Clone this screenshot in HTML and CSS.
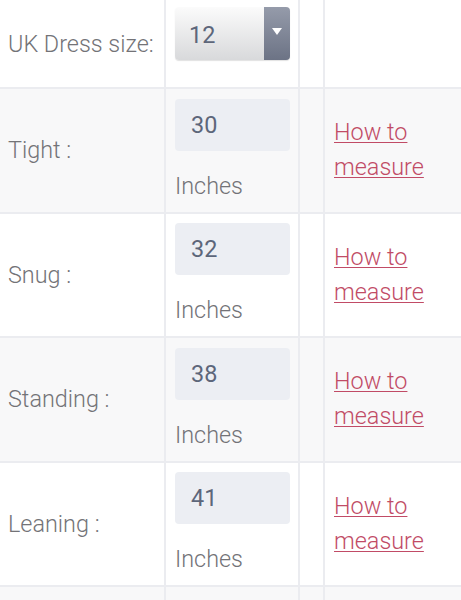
FILE: index.html
```html
<!DOCTYPE html>
<html lang="en">

<head>
    <meta charset="UTF-8">
    <meta name="viewport" content="width=device-width, initial-scale=1.0">
    <title>Size guide</title>

    <link rel="stylesheet" href="styles.css">
</head>

<body>
    <div id="wrap">
        <table id="sizes">
            <tr class="row-size">
                <td class="label">UK Dress size:</td>
                <td class="field">
                    <div class="select">
                        <span class="select-value">12</span>
                        <span class="select-arrow"></span>
                    </div>
                </td>
                <td class="gap"></td>
                <td class="help"></td>
            </tr>
            <tr class="odd">
                <td class="label">Tight :</td>
                <td class="field">
                    <div class="input">30</div>
                    <div class="unit">Inches</div>
                </td>
                <td class="gap"></td>
                <td class="help"><a href="javascript:;">How to measure</a></td>
            </tr>
            <tr>
                <td class="label">Snug :</td>
                <td class="field">
                    <div class="input">32</div>
                    <div class="unit">Inches</div>
                </td>
                <td class="gap"></td>
                <td class="help"><a href="javascript:;">How to measure</a></td>
            </tr>
            <tr class="odd">
                <td class="label">Standing :</td>
                <td class="field">
                    <div class="input">38</div>
                    <div class="unit">Inches</div>
                </td>
                <td class="gap"></td>
                <td class="help"><a href="javascript:;">How to measure</a></td>
            </tr>
            <tr>
                <td class="label">Leaning :</td>
                <td class="field">
                    <div class="input">41</div>
                    <div class="unit">Inches</div>
                </td>
                <td class="gap"></td>
                <td class="help"><a href="javascript:;">How to measure</a></td>
            </tr>
            <tr class="odd">
                <td class="label"></td>
                <td class="field"></td>
                <td class="gap"></td>
                <td class="help"></td>
            </tr>
        </table>
    </div>
</body>

</html>
```

FILE: styles.css
```css
* {
    padding: 0;
    margin: 0;
    box-sizing: border-box;
}

body {
    background: #fff;
    font-family: Roboto, "Liberation Sans", sans-serif;
    font-weight: 300;
    font-size: 23.4px;
    color: #737377;
    overflow: hidden;
}

#wrap {
    width: 461px;
    height: 600px;
    overflow: hidden;
}

#sizes {
    border-collapse: collapse;
    table-layout: fixed;
    width: 520px;
}

#sizes td {
    border: 2px solid #ebecf0;
    vertical-align: middle;
}

#sizes tr:first-child td {
    border-top: none;
}

#sizes td:first-child {
    border-left: none;
}

#sizes .odd td {
    background: #f8f8f9;
}

.label {
    width: 165px;
    padding-left: 8px;
    white-space: nowrap;
}

.field {
    width: 134px;
    padding: 9.5px 10px 8px 9px;
}

.gap {
    width: 25px;
}

.help {
    padding-left: 9px;
    line-height: 35px;
}

.help a {
    display: block;
    width: 110px;
    color: #c14b66;
    text-decoration: underline;
    text-decoration-thickness: 1px;
    text-underline-offset: 2px;
}

.row-size td {
    height: 88px;
}

#sizes .row-size .field {
    vertical-align: top;
    padding-top: 7px;
}

.select {
    display: flex;
    width: 115px;
    height: 53px;
    border-radius: 4px;
    overflow: hidden;
    background: linear-gradient(#fbfbfb, #d8d9db);
    box-shadow: 0 1px 1px rgba(0, 0, 0, 0.12);
}

.select-value {
    flex: 1;
    padding-left: 14px;
    padding-top: 2px;
    line-height: 53px;
    font-weight: 400;
    color: #5d667a;
}

.select-arrow {
    position: relative;
    width: 26px;
    background: linear-gradient(#959baa, #6c7385);
}

.select-arrow:after {
    content: "";
    position: absolute;
    left: 8px;
    top: 21px;
    border-left: 5px solid transparent;
    border-right: 5px solid transparent;
    border-top: 7px solid #fff;
}

.input {
    width: 115px;
    height: 52px;
    padding-left: 16px;
    line-height: 52px;
    border-radius: 4px;
    background: #eceef3;
    font-weight: 400;
    color: #5d667a;
}

.unit {
    margin-top: 17px;
    line-height: 36px;
}
```
